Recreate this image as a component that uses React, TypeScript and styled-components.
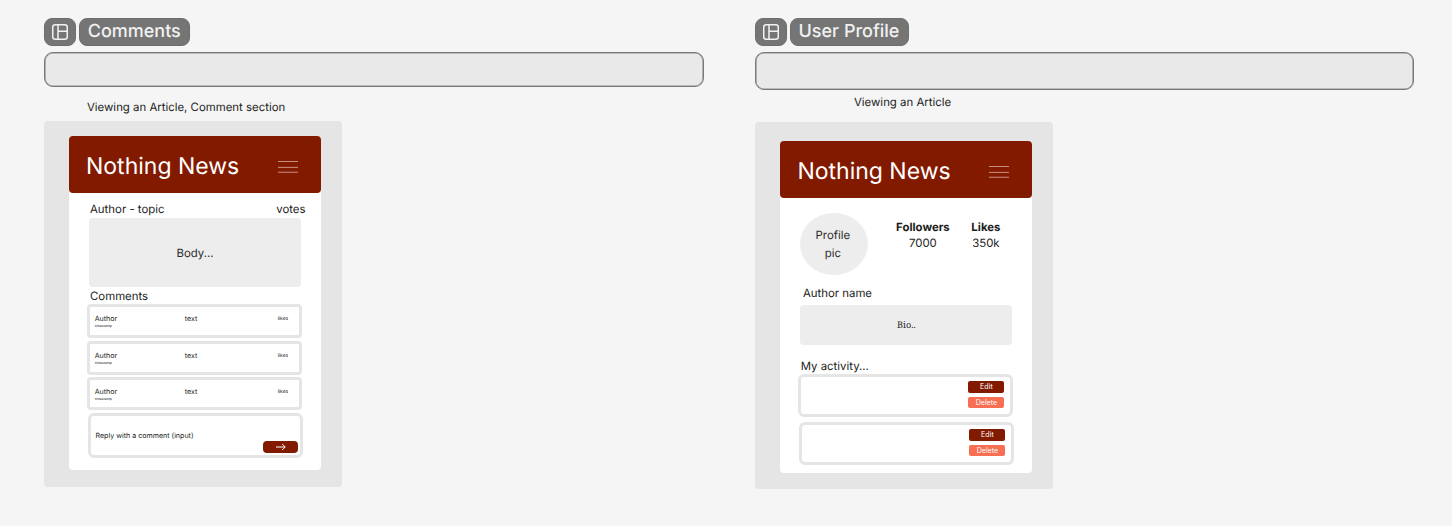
import React from 'react';
import styled, { createGlobalStyle } from 'styled-components';

const GlobalStyle = createGlobalStyle`
  * { box-sizing: border-box; }
  body {
    margin: 0;
    background: #f5f5f5;
    color: #1c1c1c;
    font-family: Inter, 'Liberation Sans', sans-serif;
    text-rendering: geometricPrecision;
  }
`;

const Board = styled.main`
  display: flex;
  gap: 51px;
  height: 526px;
  padding: 18px 0 0 44px;
  overflow: hidden;
`;

const Section = styled.section`
  display: flex;
  flex-direction: column;
  align-items: flex-start;
  width: 660px;
`;

const TagRow = styled.div`
  display: flex;
  gap: 2.5px;
  height: 28px;
  margin-bottom: 6px;
`;

const Tag = styled.div<{ $width: number }>`
  display: flex;
  align-items: center;
  justify-content: center;
  width: ${(p) => p.$width}px;
  border-radius: 8px;
  border: 1px solid #6e6e6e;
  background: #757575;
  color: #f1f1f1;
  font-size: 18px;
  font-weight: 500;
  line-height: 26px;
  white-space: nowrap;
`;

const Bar = styled.div<{ $width: number; $height: number }>`
  width: ${(p) => p.$width}px;
  height: ${(p) => p.$height}px;
  border: 1px solid #787878;
  border-radius: 9px;
  background: #e9e9e9;
  box-shadow: inset 0 0 0 0.6px #8c8c8c;
`;

const Caption = styled.h2<{ $top: number; $left: number; $bottom: number }>`
  margin: ${(p) => p.$top}px 0 ${(p) => p.$bottom}px ${(p) => p.$left}px;
  font-size: 11.4px;
  font-weight: 400;
  line-height: 16px;
  white-space: nowrap;
`;

const Frame = styled.div<{ $top: number; $left: number; $height: number }>`
  width: 298px;
  height: ${(p) => p.$height}px;
  padding: ${(p) => p.$top}px 0 0 ${(p) => p.$left}px;
  border-radius: 4px;
  background: #e5e5e5;
`;

const Screen = styled.article<{ $height: number }>`
  width: 252px;
  height: ${(p) => p.$height}px;
  border-radius: 4px;
  background: #ffffff;
`;

const Masthead = styled.header`
  display: flex;
  align-items: center;
  justify-content: space-between;
  height: 57px;
  padding: 3px 23px 0 17px;
  border-radius: 4px;
  background: #821a00;
  color: #ffffff;
`;

const Brand = styled.h1`
  margin: 0;
  font-size: 23px;
  font-weight: 400;
  line-height: 30px;
  white-space: nowrap;
`;

const Content = styled.div<{ $top: number }>`
  display: flex;
  flex-direction: column;
  align-items: flex-start;
  padding: ${(p) => p.$top}px 0 0 20px;
`;

const Meta = styled.div`
  display: flex;
  justify-content: space-between;
  width: 215.5px;
  margin: 0 0 1px 1px;
  font-size: 11.4px;
  line-height: 16px;
`;

const Label = styled.div<{ $top: number; $left: number; $bottom: number }>`
  margin: ${(p) => p.$top}px 0 ${(p) => p.$bottom}px ${(p) => p.$left}px;
  font-size: 11.4px;
  line-height: 16px;
  white-space: nowrap;
`;

const Placeholder = styled.div<{ $height: number; $serif?: boolean }>`
  display: flex;
  align-items: center;
  justify-content: center;
  width: 212px;
  height: ${(p) => p.$height}px;
  padding-bottom: ${(p) => (p.$serif ? 2 : 0)}px;
  border-radius: 4px;
  background: #ededed;
  color: #2c2c2c;
  font-family: ${(p) => (p.$serif ? "'Noto Serif', 'Liberation Serif', serif" : 'inherit')};
  font-size: ${(p) => (p.$serif ? 9.2 : 11.4)}px;
`;

const CommentCard = styled.div<{ $bottom: number }>`
  display: grid;
  grid-template-columns: 90px 93px 1fr;
  width: 215px;
  height: 33.5px;
  margin: 0 0 ${(p) => p.$bottom}px -2px;
  padding: 7px 0 0 4.7px;
  border: 3px solid #e5e5e5;
  border-radius: 4px;
  background: #ffffff;
`;

const CommentText = styled.div`
  font-size: 7.1px;
  line-height: 10px;
`;

const Timestamp = styled.div`
  font-size: 3.5px;
  line-height: 4px;
`;

const LikesText = styled.div`
  font-size: 4.9px;
  line-height: 10.5px;
`;

const ReplyBox = styled.div`
  display: flex;
  justify-content: space-between;
  width: 215px;
  height: 45px;
  margin-left: -1px;
  padding: 0 2px 1.5px 4.5px;
  border: 3px solid #e5e5e5;
  border-radius: 6px;
  background: #ffffff;
  font-size: 7.1px;
  line-height: 40px;
`;

const SendButton = styled.button`
  display: flex;
  align-items: center;
  justify-content: center;
  align-self: flex-end;
  width: 35px;
  height: 12px;
  padding: 0;
  border: 0;
  border-radius: 4px;
  background: #821a00;
`;

const ProfileRow = styled.div`
  display: flex;
  align-items: flex-start;
`;

const Avatar = styled.div`
  display: flex;
  align-items: center;
  justify-content: center;
  width: 68px;
  height: 62px;
  padding: 1px 14px 0 11px;
  border-radius: 50%;
  background: #ededed;
  color: #2c2c2c;
  font-size: 11.4px;
  line-height: 17.4px;
  text-align: center;
`;

const Stat = styled.div<{ $width: number; $left: number }>`
  width: ${(p) => p.$width}px;
  margin: 6px 0 0 ${(p) => p.$left}px;
  font-size: 11.4px;
  line-height: 16.2px;
  text-align: center;
`;

const ActivityCard = styled.div<{ $left: number; $bottom: number }>`
  display: flex;
  flex-direction: column;
  align-items: flex-end;
  gap: 4px;
  width: 215px;
  height: 43px;
  margin: 0 0 ${(p) => p.$bottom}px ${(p) => p.$left}px;
  padding: 4px 6px 0 0;
  border: 3px solid #e5e5e5;
  border-radius: 6px;
  background: #ffffff;
`;

const ActionButton = styled.button<{ $danger?: boolean }>`
  width: 36px;
  height: 11.7px;
  padding: 0;
  border: 0;
  border-radius: 2px;
  background: ${(p) => (p.$danger ? '#f76e52' : '#821a00')};
  color: #ffffff;
  font-family: inherit;
  font-size: 7.1px;
  line-height: 11.7px;
`;

const LayoutIcon = () => (
  <svg width="16" height="16" viewBox="0 0 16 16" fill="none" stroke="#f1f1f1" strokeWidth="1.5">
    <rect x="0.75" y="0.75" width="14.5" height="14.5" rx="2.5" />
    <path d="M6 1v14M6 7.3h9" />
  </svg>
);

const MenuIcon = () => (
  <svg width="20" height="14" viewBox="0 0 20 14" stroke="#cd9c90" strokeWidth="0.9">
    <path d="M0 2.5h20M0 8.4h20" />
    <path d="M0 13.3h20" strokeWidth="1.3" opacity="0.7" />
  </svg>
);

const ArrowIcon = () => (
  <svg width="10" height="8" viewBox="0 0 10 8" fill="none" stroke="#ffffff" strokeWidth="1">
    <path d="M0 4h9.2M6.2 1l3 3-3 3" />
  </svg>
);

const SectionTag = ({ title, width }: { title: string; width: number }) => (
  <TagRow>
    <Tag $width={32}>
      <LayoutIcon />
    </Tag>
    <Tag $width={width}>{title}</Tag>
  </TagRow>
);

const SiteHeader = () => (
  <Masthead>
    <Brand>Nothing News</Brand>
    <MenuIcon />
  </Masthead>
);

const Comment = ({ bottom }: { bottom: number }) => (
  <CommentCard $bottom={bottom}>
    <div>
      <CommentText>Author</CommentText>
      <Timestamp>timestamp</Timestamp>
    </div>
    <CommentText>text</CommentText>
    <LikesText>likes</LikesText>
  </CommentCard>
);

const Activity = ({ left, bottom }: { left: number; bottom: number }) => (
  <ActivityCard $left={left} $bottom={bottom}>
    <ActionButton>Edit</ActionButton>
    <ActionButton $danger>Delete</ActionButton>
  </ActivityCard>
);

export default function App() {
  return (
    <>
      <GlobalStyle />
      <Board>
        <Section>
          <SectionTag title="Comments" width={111.5} />
          <Bar $width={660} $height={35} />
          <Caption $top={12} $left={43} $bottom={6}>
            Viewing an Article, Comment section
          </Caption>
          <Frame $top={15} $left={25} $height={366}>
            <Screen $height={333.5}>
              <SiteHeader />
              <Content $top={8}>
                <Meta>
                  <span>Author - topic</span>
                  <span>votes</span>
                </Meta>
                <Placeholder $height={69}>Body...</Placeholder>
                <Label $top={1} $left={1} $bottom={0}>
                  Comments
                </Label>
                <Comment bottom={3.5} />
                <Comment bottom={2.2} />
                <Comment bottom={2.8} />
                <ReplyBox>
                  Reply with a comment (input)
                  <SendButton aria-label="Send">
                    <ArrowIcon />
                  </SendButton>
                </ReplyBox>
              </Content>
            </Screen>
          </Frame>
        </Section>
        <Section>
          <SectionTag title="User Profile" width={119} />
          <Bar $width={659} $height={38} />
          <Caption $top={4} $left={99} $bottom={12}>
            Viewing an Article
          </Caption>
          <Frame $top={19} $left={25.4} $height={367}>
            <Screen $height={332}>
              <SiteHeader />
              <Content $top={15}>
                <ProfileRow>
                  <Avatar>Profile pic</Avatar>
                  <Stat $width={60} $left={24.5}>
                    <strong>Followers</strong>
                    <div>7000</div>
                  </Stat>
                  <Stat $width={40} $left={13}>
                    <strong>Likes</strong>
                    <div>350k</div>
                  </Stat>
                </ProfileRow>
                <Label $top={10} $left={2.5} $bottom={4}>
                  Author name
                </Label>
                <Placeholder $height={40} $serif>
                  Bio..
                </Placeholder>
                <Label $top={13} $left={0.3} $bottom={0}>
                  My activity...
                </Label>
                <Activity left={-2} bottom={5} />
                <Activity left={-1} bottom={0} />
              </Content>
            </Screen>
          </Frame>
        </Section>
      </Board>
    </>
  );
}
